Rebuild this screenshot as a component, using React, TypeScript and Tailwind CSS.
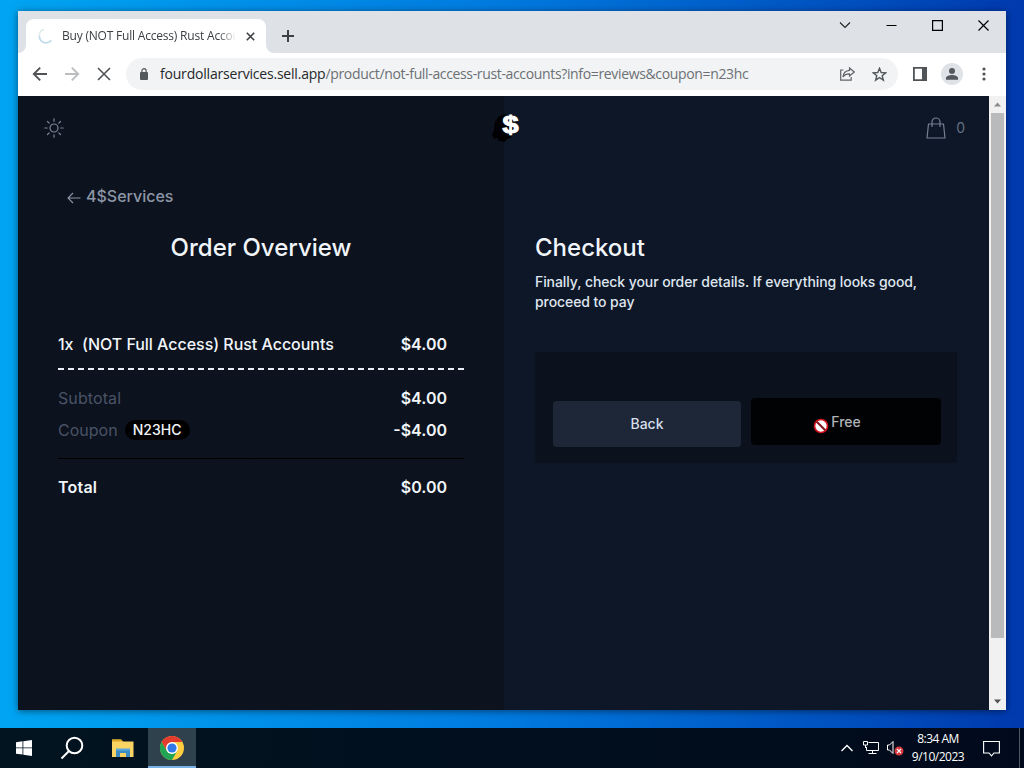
import { ReactNode } from "react";

interface LineProps{
    label:ReactNode;
    price:string;
    className:string;
}

function Line({label,price,className}:LineProps){
return <div className={className + " flex items-center justify-between pr-[17px] text-[#f1f5f9] text-base"}>
        <div className="flex items-center">{label}</div>
        <span className="font-semibold">{price}</span>
    </div>
}

function TabStrip(){
return <div className="h-[42px] bg-[#dee1e6] flex justify-between">
        <div className="flex items-end">
            <svg width="8" height="8" viewBox="0 0 8 8" fill="#fff"><path d="M8 0v8H0a8 8 0 0 0 8-8z"/></svg>
            <div className="w-[240px] h-[34px] bg-white rounded-t-lg flex items-center pl-[12px] pr-[11px]">
                <svg width="16" height="16" viewBox="0 0 16 16" fill="none" strokeWidth="1.8">
                    <path d="M6 1.4A6.8 6.8 0 0 0 1.200 8" stroke="#e2ecee"/>
                    <path d="M1.200 8A6.8 6.8 0 0 0 8 14.8a6.8 6.8 0 0 0 5.4-2.6" stroke="#c3dcea"/>
                </svg>
                <div className="ml-2 w-[174px] whitespace-nowrap text-[12px] tracking-[-0.2px] text-[#3c4043] mask-r-from-90% mask-r-to-100%">Buy (NOT Full Access) Rust Accou</div>
                <svg className="ml-[10px] shrink-0" width="9" height="9" viewBox="0 0 9 9" stroke="#3c4043" strokeWidth="1.6"><path d="M.8.8l7.4 7.4M8.2.8L.8 8.2"/></svg>
            </div>
            <svg width="8" height="8" viewBox="0 0 8 8" fill="#fff"><path d="M0 0v8h8a8 8 0 0 1-8-8z"/></svg>
            <svg className="ml-2 mb-[11px]" width="12" height="12" viewBox="0 0 12 12" stroke="#3c4043" strokeWidth="2"><path d="M6 0v12M0 6h12"/></svg>
        </div>
        <div className="flex items-start gap-[35px] pt-[9px] pr-[17px]">
            <svg width="12" height="11" viewBox="0 0 12 11" fill="none" stroke="#222" strokeWidth="1.1"><path d="M1 2.5l5 5 5-5"/></svg>
            <svg width="11" height="11" viewBox="0 0 11 11" stroke="#000"><path d="M.5 5.5h10"/></svg>
            <svg width="11" height="11" viewBox="0 0 11 11" fill="none" stroke="#000" strokeWidth="1.2"><path d="M.6.6h9.8v9.8H.6z"/></svg>
            <svg width="11" height="11" viewBox="0 0 11 11" stroke="#000" strokeWidth="1.2"><path d="M.5.5l10 10M10.5.5l-10 10"/></svg>
        </div>
    </div>
}

function Toolbar(){
return <div className="h-[43px] bg-white flex items-center pb-px">
        <svg className="ml-[14px]" width="16" height="16" viewBox="0 0 16 16" fill="none" stroke="#515457" strokeWidth="1.9"><path d="M15 8H2M8.2 1.6L1.8 8l6.4 6.4"/></svg>
        <svg className="ml-4" width="16" height="16" viewBox="0 0 16 16" fill="none" stroke="#bbbdbf" strokeWidth="1.9"><path d="M1 8h13M7.8 1.6L14.2 8l-6.4 6.4"/></svg>
        <svg className="ml-[17px]" width="14" height="14" viewBox="0 0 14 14" stroke="#515457" strokeWidth="1.6"><path d="M1 1l12 12M13 1L1 13"/></svg>
        <div className="ml-[15px] w-[772px] h-8 rounded-full bg-[#f1f3f4] flex items-center pl-[14px]">
            <svg width="8" height="12" viewBox="0 0 8 12"><rect y="4" width="8" height="8" rx="1" fill="#55585c"/><path d="M1.9 5V2.8a2.1 2.1 0 0 1 4.2 0V5" fill="none" stroke="#55585c" strokeWidth="1.2"/></svg>
            <div className="ml-3 w-[680px] whitespace-nowrap text-[14px] leading-5 tracking-[-0.35px] text-[#6c7074]"><span className="text-[#25282b] tracking-[-0.2px]">fourdollarservices.sell.app</span>/product/not-full-access-rust-accounts?info=reviews&amp;coupon=n23hc</div>
            <svg width="15" height="14" viewBox="0 0 15 14" fill="none" stroke="#606368" strokeWidth="1.2"><path d="M3.500 3H.7v10.200h10.500V10"/><path d="M9.5 1l4.8 4-4.8 4V6.8C6.3 6.7 4.4 7.8 3 10c.3-3.600 2.500-6.200 6.500-6.600z"/></svg>
            <svg className="ml-[17px]" width="15" height="15" viewBox="0 0 15 15" fill="none" stroke="#55585c" strokeWidth="1.4"><path d="M7.500 1.300l1.700 4.200 4.500.3-3.500 2.900 1.200 4.500-3.900-2.500-3.900 2.500 1.200-4.500L1.300 5.800l4.500-.3z"/></svg>
        </div>
        <svg className="ml-[15px]" width="14" height="14" viewBox="0 0 14 14"><path d="M.9.9h12.200v12.200H.9z" fill="none" stroke="#515457" strokeWidth="1.8"/><path d="M9 0h5v14H9z" fill="#515457"/></svg>
        <svg className="ml-[14px]" width="22" height="22" viewBox="0 0 22 22"><circle cx="11" cy="11" r="11" fill="#dfe2e6"/><circle cx="11" cy="8" r="3" fill="#55585e"/><path d="M5 16.800V15c0-2 3.500-3 6-3s6 1 6 3v1.800z" fill="#55585e"/></svg>
        <svg className="ml-[19px]" width="4" height="14" viewBox="0 0 4 14" fill="#515457"><circle cx="2" cy="2" r="1.600"/><circle cx="2" cy="7" r="1.600"/><circle cx="2" cy="12" r="1.600"/></svg>
    </div>
}

function ShopHeader(){
return <div className="h-16 shrink-0 grid grid-cols-3 items-center">
        <svg className="ml-[26px]" width="20" height="20" viewBox="0 0 20 20" fill="none" stroke="#7d8797" strokeWidth="1.200" strokeLinecap="round">
            <circle cx="10" cy="10" r="4"/>
            <path d="M10 .8v2.400M10 16.800v2.400M.8 10h2.400M16.800 10h2.400M3.500 3.500l1.700 1.700M14.800 14.800l1.700 1.700M16.500 3.500l-1.700 1.700M5.200 14.800l-1.700 1.700"/>
        </svg>
        <svg className="justify-self-center" width="36" height="36" viewBox="0 0 36 36">
            <path d="M13 7l6-3 8 2 3 9-3 9-1 4-4 1-2 3-6-1-2-3-3 1-2-4 2-5 1-8z" fill="#000" fillOpacity=".9"/>
            <text x="17.500" y="23" fill="#fff" stroke="#fff" strokeWidth="1" fontFamily="Liberation Sans, sans-serif" fontWeight="700" fontSize="23" textLength="16" lengthAdjust="spacingAndGlyphs">$</text>
        </svg>
        <div className="justify-self-end flex items-center pr-6 text-[#657083] font-['Inter'] text-sm">
            <svg width="20" height="22" viewBox="0 0 20 22" fill="none" stroke="#768091" strokeWidth="1.200" strokeLinejoin="round"><path d="M2.500 7h15l1.500 14H1z"/><path d="M6 10V5a4 4 0 0 1 8 0v5"/></svg>
            <span className="ml-[10px]">0</span>
        </div>
    </div>
}

function Shop(){
return <div className="flex-1 flex flex-col bg-linear-to-r from-[#0c121e] from-[486px] to-[#0e1728] to-[486px] font-['Inter',sans-serif]">
        <ShopHeader/>
        <div className="flex">
            <div className="w-[486px] pl-10 pr-10">
                <div className="mt-6 ml-[9px] h-6 flex items-center text-[#8c96a6] font-medium text-base">
                    <svg className="mt-[3px] mr-[5px]" width="14" height="12" viewBox="0 0 14 12" fill="none" stroke="#8c96a6" strokeWidth="1.100"><path d="M13.500 6H1M6 1L1 6l5 5"/></svg>
                    4$Services
                </div>
                <h1 className="mt-6 h-8 leading-8 text-center text-2xl font-medium text-[#f1f5f9]">Order Overview</h1>
                <Line className="mt-[68px] h-6" label={<span className="font-medium whitespace-pre tracking-[-0.03px]">1x  (NOT Full Access) Rust Accounts</span>} price="$4.00"/>
                <div className="mt-3 h-[2px] bg-[repeating-linear-gradient(to_right,#e8edf5_0px,#e8edf5_6px,transparent_6px,transparent_10px)]"></div>
                <Line className="mt-4 h-6" label={<span className="text-[#4a5366] tracking-[0.1px]">Subtotal</span>} price="$4.00"/>
                <Line className="mt-2 h-6" label={<>
                    <span className="text-[#4a5366]">Coupon</span>
                    <span className="ml-[7px] h-5 w-[65px] rounded-full bg-black text-sm leading-5 font-medium text-center">N23HC</span>
                </>} price="-$4.00"/>
                <div className="mt-4 h-px bg-black"></div>
                <Line className="mt-4 h-6" label={<span className="font-semibold tracking-[0.2px]">Total</span>} price="$0.00"/>
            </div>
            <div className="w-[485px] pl-[31px] pr-8 pt-[72px]">
                <h1 className="h-8 leading-8 text-2xl font-medium text-[#f1f5f9]">Checkout</h1>
                <p className="mt-2 text-sm leading-5 font-medium tracking-[-0.08px] text-[#dfe6ef] w-[400px]">Finally, check your order details. If everything looks good, proceed to pay</p>
                <div className="mt-10 h-[111px] bg-[#0c121d] flex items-end gap-[10px] pl-[18px] pb-4">
                    <div className="w-[188px] h-[46px] rounded bg-[#1d2738] text-[#d5deea] text-sm font-medium flex items-center justify-center">Back</div>
                    <div className="relative mb-[2px] w-[190px] h-[47px] rounded bg-[#010204] text-[#b0b3b8] text-sm font-medium flex items-center justify-center">
                        Free
                        <svg className="absolute left-[62px] top-[20px]" width="16" height="16" viewBox="0 0 16 16"><circle cx="8" cy="8" r="6.500" fill="#fff" stroke="#d3131c" strokeWidth="1.700"/><path d="M3.800 3.800l8.400 8.400" stroke="#82141b" strokeWidth="2"/></svg>
                    </div>
                </div>
            </div>
        </div>
    </div>
}

function Scrollbar(){
return <div className="w-[17px] bg-[#f1f1f1] flex flex-col items-center">
        <svg width="17" height="17" viewBox="0 0 17 17"><path d="M5 10.500l3.500-4 3.500 4z" fill="#8b8b8b"/></svg>
        <div className="w-[13px] h-[525px] bg-[#b9babc]"></div>
        <svg className="mt-auto" width="17" height="17" viewBox="0 0 17 17"><path d="M5 6.500l3.500 4 3.500-4z" fill="#505050"/></svg>
    </div>
}

function Taskbar(){
return <div className="h-10 bg-linear-to-r from-[#02141f] to-[#010a1c] flex items-center text-white">
        <svg className="ml-4" width="16" height="16" viewBox="0 0 16 16" fill="#fff"><path d="M0 2.200l6.500-.9v6.200H0zM7.300 1.200L16 0v7.500H7.300zM0 8.300h6.500v6.200L0 13.700zM7.300 8.300H16V16l-8.700-1.200z"/></svg>
        <svg className="ml-7" width="24" height="24" viewBox="0 0 24 24" fill="none" stroke="#fff" strokeWidth="2"><circle cx="14.500" cy="9.500" r="7.800"/><path d="M9 15l-7.500 7.500"/></svg>
        <svg className="ml-7" width="22" height="19" viewBox="0 0 22 19"><path d="M0 .5h9l2 2h10.500v15.500H0z" fill="#f9d462"/><path d="M0 .5h9l2 2H0z" fill="#dba624"/><path d="M4 18v-7.500h14V18h-4v-4H8v4z" fill="#3d8bc4"/><path d="M4 9.500h14v2H4z" fill="#5ba8dc"/></svg>
        <div className="ml-[14px] w-12 h-10 bg-[#2e414c] border-b-2 border-[#76b2e8] flex items-center justify-center">
            <svg className="mt-px" width="24" height="24" viewBox="0 0 24 24">
                <circle cx="12" cy="12" r="12" fill="#ffcd40"/>
                <path d="M1.600 6A12 12 0 0 1 22.400 6H12L6.800 15z" fill="#e33b2e"/>
                <path d="M1.600 6L6.800 15 12 18l5.200-3L12 24A12 12 0 0 1 1.600 6z" fill="#21a453"/>
                <circle cx="12" cy="12" r="6" fill="#fff"/>
                <circle cx="12" cy="12" r="4.600" fill="#2f79e8"/>
            </svg>
        </div>
        <svg className="ml-auto" width="12" height="8" viewBox="0 0 12 8" fill="none" stroke="#fff" strokeWidth="1.400"><path d="M.5 7L6 1.500 11.500 7"/></svg>
        <svg className="ml-[10px]" width="17" height="14" viewBox="0 0 17 14" fill="none" stroke="#fff"><path d="M5.500 1.500h10v8h-12V6M9.500 9.500v3M5.500 12.500h8M.5.5h4v3.500h-4zM2.500 4v3"/></svg>
        <svg className="ml-[7px]" width="17" height="16" viewBox="0 0 17 16"><path d="M.5 5h2l3.500-3.500v12L2.500 10H.5z" fill="none" stroke="#fff"/><circle cx="12" cy="11" r="4.500" fill="#d5383c"/><path d="M10 9l4 4M14 9l-4 4" stroke="#fff" strokeWidth="1.100"/></svg>
        <div className="ml-[6px] w-[56px] text-center whitespace-nowrap text-[12px] leading-[18px] tracking-[-0.5px]">
            <div>8:34 AM</div>
            <div>9/10/2023</div>
        </div>
        <svg className="ml-[17px] mr-[19px]" width="17" height="17" viewBox="0 0 17 17" fill="none" stroke="#fff" strokeWidth="1.100"><path d="M.6 1.500h15.800v11.500H11L8.500 15.800 6 13H.6z"/></svg>
        <div className="w-px h-10 mr-1 bg-[#4c5560]"></div>
    </div>
}

export default function App(){
return <div className="w-[1024px] h-[768px] overflow-hidden flex flex-col bg-linear-to-r from-[#00a5f2] via-[#0079df] to-[#0039ae] font-['Open_Sans',sans-serif]">
        <div className="h-[728px] px-[18px] pt-[11px] pb-[18px]">
            <div className="h-full flex flex-col shadow-[0_1px_7px_rgba(0,0,0,0.5)]">
                <TabStrip/>
                <Toolbar/>
                <div className="flex-1 flex">
                    <Shop/>
                    <Scrollbar/>
                </div>
            </div>
        </div>
        <Taskbar/>
    </div>
}
